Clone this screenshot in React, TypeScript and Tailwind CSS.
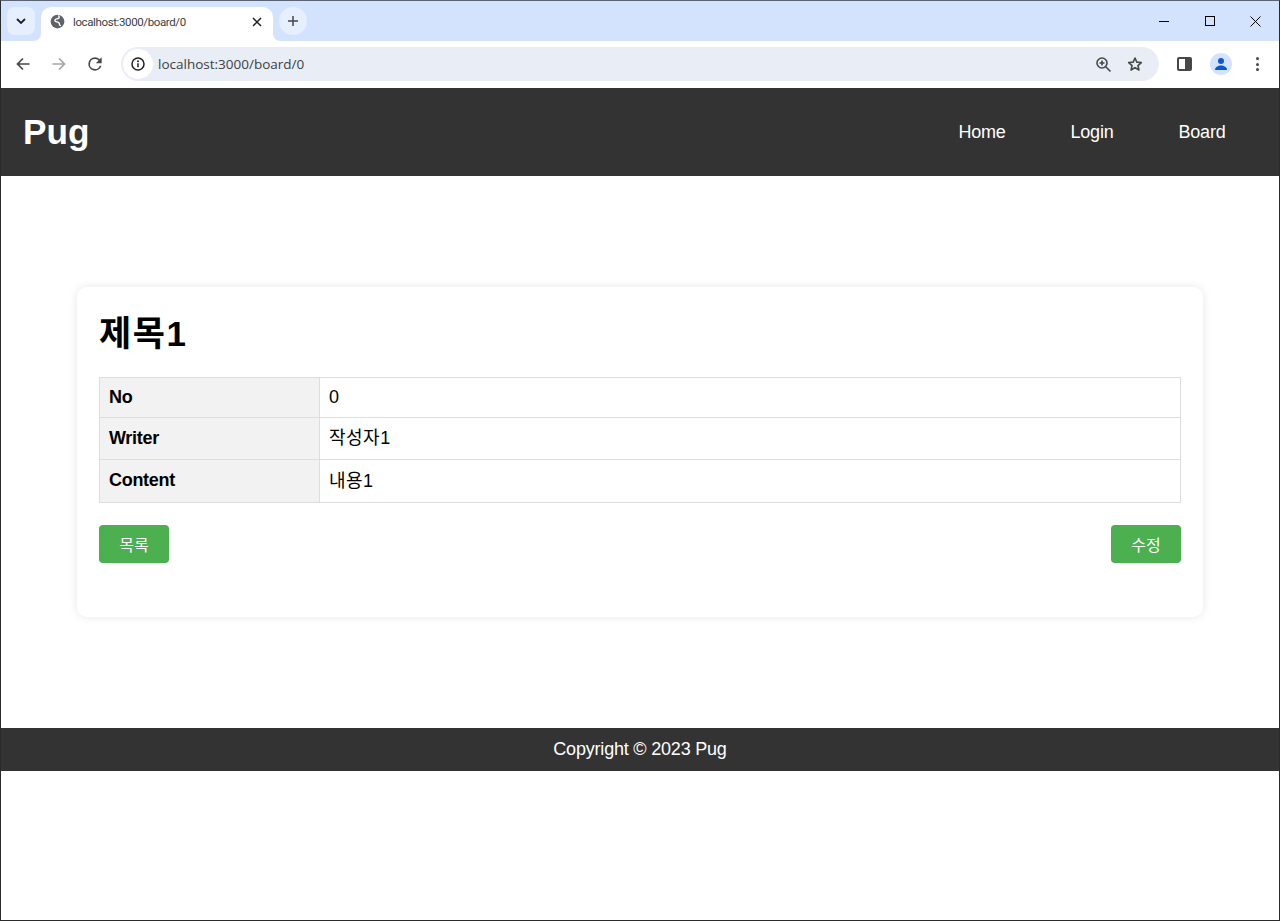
import React from "react";

const SANS = "font-['Liberation_Sans','Noto_Sans_CJK_KR',sans-serif]";

const rows = [
  { label: "No", value: "0", height: "h-[40px]", thClass: "pb-0" },
  { label: "Writer", value: "작성자1", height: "h-[42px]", thClass: "pb-0" },
  { label: "Content", value: "내용1", height: "h-[43px]", thClass: "pb-[2px]" },
];

const navItems = ["Home", "Login", "Board"];

const Tab = () => (
  <div className="relative ml-[6px] flex h-[34px] w-[232px] items-center rounded-t-[10px] bg-white pb-[5px] pl-[9px] pr-[9px]">
    <svg className="absolute -left-[8px] bottom-0" width="8" height="8" viewBox="0 0 8 8">
      <path d="M8 0V8H0C5 8 8 5 8 0Z" fill="#fff" />
    </svg>
    <svg className="absolute -right-[8px] bottom-0" width="8" height="8" viewBox="0 0 8 8">
      <path d="M0 0V8H8C3 8 0 5 0 0Z" fill="#fff" />
    </svg>
    <svg width="15" height="15" viewBox="0 0 24 24">
      <circle cx="12" cy="12" r="11" fill="#5f6368" />
      <path d="M13 2.500c2.500 1 2 3.500.5 4.500-2 1.300-4.500.5-5.500 2.500-.8 1.700 1 3 3 3.200 2.500.3 4 1.200 4 3.300 0 1.500 1 2.500 2.500 2.500" fill="none" stroke="#fff" strokeWidth="2.200" />
    </svg>
    <span className="ml-[8px] flex-1 pt-[2px] font-['Roboto',sans-serif] text-[11.500px] tracking-[-0.38px] text-[#3c4043]">
      localhost:3000/board/0
    </span>
    <svg width="10" height="10" viewBox="0 0 10 10" className="mr-[2px]" stroke="#202124" strokeWidth="1.500">
      <path d="M1 1l8 8M9 1l-8 8" />
    </svg>
  </div>
);

const TabStrip = () => (
  <div className="flex h-[40px] shrink-0 items-end bg-[#d3e3fd]">
    <div className="mb-[6px] ml-[6px] flex h-[28px] w-[28px] items-center justify-center rounded-[8px] bg-[#e6effd]">
      <svg width="10" height="7" viewBox="0 0 10 7" fill="none" stroke="#202124" strokeWidth="1.800">
        <path d="M1 1l4 4 4-4" />
      </svg>
    </div>
    <Tab />
    <div className="mb-[6px] ml-[6px] flex h-[28px] w-[28px] items-center justify-center rounded-full bg-[#e6effd]">
      <svg width="12" height="12" viewBox="0 0 12 12" stroke="#474747" strokeWidth="1.500">
        <path d="M6 1v10M1 6h10" />
      </svg>
    </div>
    <div className="mb-[12px] ml-auto flex items-center">
      <div className="flex h-[16px] w-[46px] items-center justify-center">
        <div className="h-px w-[10px] bg-black" />
      </div>
      <div className="flex h-[16px] w-[46px] items-center justify-center">
        <div className="h-[10px] w-[10px] border border-black" />
      </div>
      <div className="mr-[1px] flex h-[16px] w-[45px] items-center justify-center">
        <svg width="11" height="11" viewBox="0 0 11 11" stroke="#000" strokeWidth="1">
          <path d="M.5.5l10 10M10.500.5l-10 10" />
        </svg>
      </div>
    </div>
  </div>
);

const Toolbar = () => (
  <div className="flex h-[47px] shrink-0 items-center rounded-t-[8px] bg-white pb-[1px]">
    <svg className="ml-[15px]" width="14" height="14" viewBox="0 0 14 14" fill="none" stroke="#474747" strokeWidth="1.700">
      <path d="M13.500 7H1.500M7 1.500 1.500 7 7 12.500" />
    </svg>
    <svg className="ml-[22px]" width="14" height="14" viewBox="0 0 14 14" fill="none" stroke="#a3a5a8" strokeWidth="1.700">
      <path d="M.5 7h12M7 1.500 12.500 7 7 12.500" />
    </svg>
    <svg className="ml-[19px]" width="20" height="20" viewBox="0 0 24 24" fill="#474747">
      <path d="M17.650 6.350A7.960 7.960 0 0 0 12 4a8 8 0 1 0 7.730 10h-2.080A6 6 0 1 1 12 6c1.660 0 3.140.69 4.220 1.780L13 11h7V4l-2.350 2.350Z" />
    </svg>
    <div className="ml-[16px] flex h-[34px] w-[1038px] items-center rounded-full bg-[#e9eef6] pl-[2px] pr-[16px]">
      <div className="flex h-[30px] w-[30px] items-center justify-center rounded-full bg-white">
        <svg width="14" height="14" viewBox="0 0 14 14" fill="none">
          <circle cx="7" cy="7" r="6" stroke="#202124" strokeWidth="1.500" />
          <path d="M7 6.200v4" stroke="#202124" strokeWidth="1.500" />
          <circle cx="7" cy="4.200" r="1" fill="#202124" />
        </svg>
      </div>
      <span className="ml-[5px] flex-1 font-['Open_Sans',sans-serif] text-[13.500px] text-[#3c4043]">
        localhost:3000/board/0
      </span>
      <svg width="17" height="17" viewBox="0 0 17 17" fill="none" stroke="#474747" strokeWidth="1.600">
        <circle cx="7" cy="7" r="5" />
        <path d="M10.700 10.700 15.500 15.500M4.500 7h5M7 4.500v5" />
      </svg>
      <svg className="ml-[15px]" width="16" height="16" viewBox="0 0 24 24" fill="none" stroke="#474747" strokeWidth="2.400" strokeLinejoin="round">
        <path d="m12 3 2.700 6.200 6.800.6-5.100 4.500 1.500 6.700L12 17.500 6.100 21l1.500-6.700-5.100-4.500 6.800-.6L12 3Z" />
      </svg>
    </div>
    <div className="ml-[18px] flex h-[14px] w-[15px] overflow-hidden rounded-[2px] border-2 border-[#474747]">
      <div className="w-1/2 bg-white" />
      <div className="w-1/2 bg-[#474747]" />
    </div>
    <div className="ml-[18px] flex h-[22px] w-[22px] items-center justify-center rounded-full bg-[#d3e3fd]">
      <svg width="14" height="14" viewBox="0 0 14 14" fill="#0b57d0">
        <circle cx="7" cy="4" r="3" />
        <path d="M1 13c0-3 3-4.500 6-4.500s6 1.500 6 4.500H1Z" />
      </svg>
    </div>
    <div className="ml-[24px] flex flex-col gap-[2.500px]">
      <div className="h-[3px] w-[3px] rounded-full bg-[#474747]" />
      <div className="h-[3px] w-[3px] rounded-full bg-[#474747]" />
      <div className="h-[3px] w-[3px] rounded-full bg-[#474747]" />
    </div>
  </div>
);

const Button = ({ label }: { label: string }) => (
  <button className="h-[38px] w-[70px] rounded-[4px] bg-[#4caf50] pt-[4px] text-[16px] leading-none text-white">{label}</button>
);

export default function App() {
  return (
    <div className={`flex h-[921px] flex-col overflow-hidden border border-[#2b2b2b] border-t-[#5b6473] bg-white ${SANS}`}>
      <TabStrip />
      <Toolbar />
      <header className="flex h-[88px] shrink-0 items-center justify-between bg-[#333] pl-[22px] pr-[22px] text-white">
        <h1 className="text-[35.200px] font-bold">Pug</h1>
        <nav className="flex">
          {navItems.map((item) => (
            <a key={item} className="flex w-[110px] justify-center text-[18px] tracking-[-0.2px]">
              {item}
            </a>
          ))}
        </nav>
      </header>
      <main className="flex h-[552px] shrink-0 items-start justify-center pt-[111px]">
        <div className="h-[330px] w-[1126px] rounded-[10px] bg-white px-[22px] pt-[22px] shadow-[0_0_10px_rgba(0,0,0,0.1)]">
          <h2 className="pt-[2px] text-[35px] font-bold leading-[46px] tracking-[1.500px] text-black">제목1</h2>
          <table className="mt-[20px] w-full border-collapse text-[18px] text-black">
            <tbody>
              {rows.map((row) => (
                <tr key={row.label} className={row.height}>
                  <th className={`w-[220px] border border-[#ddd] bg-[#f2f2f2] px-[9px] text-left font-bold tracking-[-0.3px] ${row.thClass}`}>
                    {row.label}
                  </th>
                  <td className="border border-[#ddd] px-[9px] tracking-[0.5px]">{row.value}</td>
                </tr>
              ))}
            </tbody>
          </table>
          <div className="mt-[22px] flex justify-between">
            <Button label="목록" />
            <Button label="수정" />
          </div>
        </div>
      </main>
      <footer className="flex h-[43px] shrink-0 items-center justify-center bg-[#333] text-[18px] tracking-[-0.2px] text-white">
        Copyright © 2023 Pug
      </footer>
    </div>
  );
}
